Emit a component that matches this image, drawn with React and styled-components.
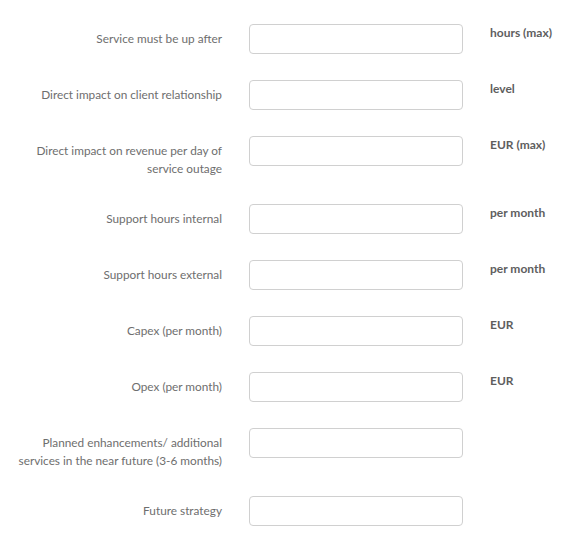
import React from "react";
import styled, { createGlobalStyle } from "styled-components";

const Global = createGlobalStyle`
  html, body { margin: 0; padding: 0; background: #fff; }
  body { font-family: Lato, "Open Sans", sans-serif; }
`;

const Form = styled.form`
  display: flex;
  flex-direction: column;
  gap: 26px;
  padding-top: 24px;
`;

const Row = styled.div`
  display: grid;
  grid-template-columns: 222px 214px auto;
  column-gap: 27px;
  align-items: start;
`;

const Label = styled.label`
  padding-top: 6px;
  text-align: right;
  font-size: 11.8px;
  line-height: 18px;
  color: #6e6e6e;
`;

const Input = styled.input`
  box-sizing: border-box;
  width: 214px;
  height: 30px;
  margin: 0;
  border: 1px solid #d0d0d0;
  border-radius: 4px;
  background: #fff;
  font: inherit;
  outline: none;
`;

const Unit = styled.span`
  font-size: 12px;
  line-height: 18px;
  font-weight: 700;
  color: #5e5e5e;
`;

const rows = [
  ["Service must be up after", "hours (max)"],
  ["Direct impact on client relationship", "level"],
  [["Direct impact on revenue per day of", "service outage"], "EUR (max)"],
  ["Support hours internal", "per month"],
  ["Support hours external", "per month"],
  ["Capex (per month)", "EUR"],
  ["Opex (per month)", "EUR"],
  [["Planned enhancements/ additional", "services in the near future (3-6 months)"], ""],
  ["Future strategy", ""],
];

export default function App() {
  return (
    <>
      <Global />
      <Form>
        {rows.map(([label, unit], i) => (
          <Row key={i}>
            <Label>
              {Array.isArray(label)
                ? label.map((l, j) => (
                    <React.Fragment key={j}>
                      {l}
                      {j < label.length - 1 && <br />}
                    </React.Fragment>
                  ))
                : label}
            </Label>
            <Input type="text" />
            <Unit>{unit}</Unit>
          </Row>
        ))}
      </Form>
    </>
  );
}
